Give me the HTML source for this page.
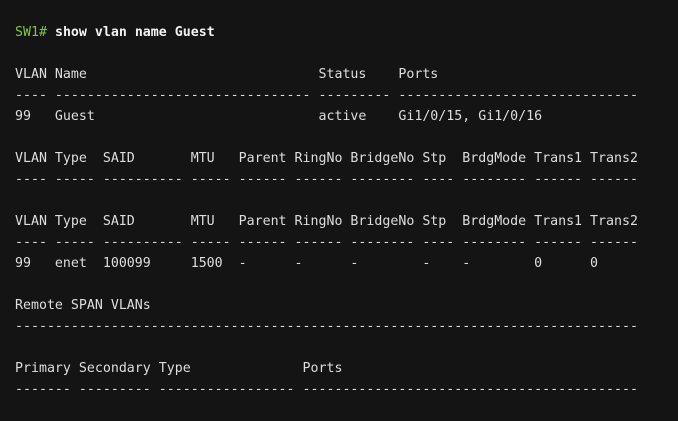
<!DOCTYPE html><html><head><style>
html,body{margin:0;padding:0;background:#141414;width:678px;height:421px;overflow:hidden}
pre{margin:0;padding:22px 0 0 15px;font-family:"DejaVu Sans Mono","Liberation Mono",monospace;font-size:13.28px;line-height:21px;color:#dedede;letter-spacing:0}
.g{color:#7ec83a}.b{font-weight:bold;color:#f2f2f2}
</style></head><body><pre><span class="g">SW1#</span> <span class="b">show vlan name Guest</span>

VLAN Name                             Status    Ports
---- -------------------------------- --------- ------------------------------
99   Guest                            active    Gi1/0/15, Gi1/0/16

VLAN Type  SAID       MTU   Parent RingNo BridgeNo Stp  BrdgMode Trans1 Trans2
---- ----- ---------- ----- ------ ------ -------- ---- -------- ------ ------

VLAN Type  SAID       MTU   Parent RingNo BridgeNo Stp  BrdgMode Trans1 Trans2
---- ----- ---------- ----- ------ ------ -------- ---- -------- ------ ------
99   enet  100099     1500  -      -      -        -    -        0      0

Remote SPAN VLANs
------------------------------------------------------------------------------

Primary Secondary Type              Ports
------- --------- ----------------- ------------------------------------------
</pre></body></html>
